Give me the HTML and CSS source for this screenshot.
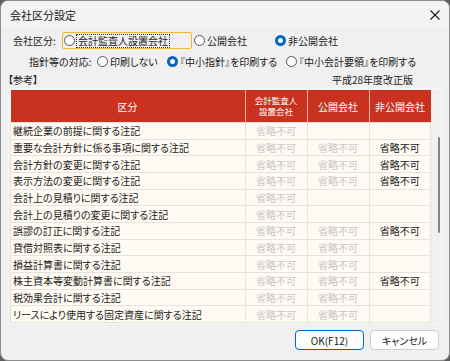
FILE: index.html
```html
<!DOCTYPE html>
<html>
<head>
    <meta charset="utf-8">
    <title>会社区分設定</title>
    <link rel="stylesheet" href="styles.css">
</head>
<body>
    <div class="window">
        <div class="titlebar">
            <span class="title">会社区分設定</span>
            <svg class="close" width="10" height="10" viewBox="0 0 10 10"><path d="M0.5 0.5L9.5 9.5M9.5 0.5L0.5 9.5" stroke="#1a1a1a" stroke-width="1.1"/></svg>
        </div>
        <div class="content">
            <div class="row row-type">
                <span class="label label-type">会社区分:</span>
                <label class="opt opt-focus"><span class="radio"></span><span class="focus-text">会計監査人設置会社</span></label>
                <label class="opt opt-public"><span class="radio"></span>公開会社</label>
                <label class="opt"><span class="radio checked"></span>非公開会社</label>
            </div>
            <div class="row row-print">
                <span class="label label-print">指針等の対応:</span>
                <label class="opt opt-none"><span class="radio"></span>印刷しない</label>
                <label class="opt opt-guide"><span class="radio checked"></span>『中小指針』を印刷する</label>
                <label class="opt"><span class="radio"></span>『中小会計要領』を印刷する</label>
            </div>
            <div class="ref-row">
                <span>【参考】</span>
                <span>平成28年度改正版</span>
            </div>
            <div class="panel">
                <table class="grid">
                    <thead>
                        <tr>
                            <th class="col-name">区分</th>
                            <th class="col-flag small">会計監査人<br>設置会社</th>
                            <th class="col-flag">公開会社</th>
                            <th class="col-flag">非公開会社</th>
                        </tr>
                    </thead>
                    <tbody id="rows"></tbody>
                </table>
                <div class="track"><div class="thumb"></div></div>
            </div>
            <div class="buttons">
                <button class="btn btn-ok">OK(F12)</button>
                <button class="btn">キャンセル</button>
            </div>
        </div>
    </div>

    <script>
        // 0 = 空欄, 1 = 省略不可(灰色), 2 = 省略不可(黒)
        var items = [
            ["継続企業の前提に関する注記", 1, 0, 0],
            ["重要な会計方針に係る事項に関する注記", 1, 1, 2],
            ["会計方針の変更に関する注記", 1, 1, 2],
            ["表示方法の変更に関する注記", 1, 1, 2],
            ["会計上の見積りに関する注記", 1, 0, 0],
            ["会計上の見積りの変更に関する注記", 1, 0, 0],
            ["誤謬の訂正に関する注記", 1, 1, 2],
            ["貸借対照表に関する注記", 1, 1, 0],
            ["損益計算書に関する注記", 1, 1, 0],
            ["株主資本等変動計算書に関する注記", 1, 1, 2],
            ["税効果会計に関する注記", 1, 1, 0],
            ["リースにより使用する固定資産に関する注記", 1, 1, 0]
        ];

        var html = "";
        items.forEach(function (item) {
            html += "<tr><td class='name'>" + item[0] + "</td>";
            for (var i = 1; i < 4; i++) {
                if (item[i] == 0) {
                    html += "<td></td>";
                } else {
                    html += "<td class='" + (item[i] == 1 ? "dim" : "on") + "'>省略不可</td>";
                }
            }
            html += "</tr>";
        });
        document.getElementById('rows').innerHTML = html;
    </script>
</body>
</html>
```

FILE: styles.css
```css
html, body {
    margin: 0;
    padding: 0;
}
body {
    background-color: #5c5c5c;
    font-family: "Noto Sans CJK JP", "Noto Sans", sans-serif;
    font-size: 10px;
    font-feature-settings: "palt";
    color: #1a1a1a;
}
.window {
    width: 450px;
    height: 361px;
    box-sizing: border-box;
    border: 1px solid #8c8c8c;
    border-radius: 8px;
    background-color: #f0f0f0;
    overflow: hidden;
}
.titlebar {
    height: 27px;
    display: flex;
    align-items: center;
    justify-content: space-between;
    padding: 0 6px 0 9px;
    background-color: #f3f3f3;
    font-size: 11px;
}
.close {
    margin-right: 3px;
}
.content {
    padding: 0 7px;
}
.row {
    display: flex;
    align-items: center;
    height: 17px;
}
.row-type {
    margin-top: 4px;
    padding-left: 5px;
}
.row-print {
    margin-top: 4px;
    padding-left: 21px;
}
.label-type {
    width: 49px;
}
.label-print {
    width: 68px;
}
.opt {
    display: flex;
    align-items: center;
    height: 17px;
    box-sizing: border-box;
}
.opt-focus {
    width: 130px;
    border: 1px solid #f2b534;
    border-radius: 2px;
    padding-left: 1px;
    margin-right: 2px;
}
.focus-text {
    outline: 1px dotted #333;
    padding: 0 1px;
    line-height: 12px;
}
.opt-public {
    width: 81px;
}
.opt-none {
    width: 70px;
}
.opt-guide {
    width: 119px;
}
.radio {
    width: 11px;
    height: 11px;
    box-sizing: border-box;
    border: 1px solid #555;
    border-radius: 50%;
    background-color: #fff;
    margin-right: 2px;
    flex-shrink: 0;
}
.radio.checked {
    border: 3.5px solid #0067c0;
    background-color: #fff;
}
.ref-row {
    display: flex;
    justify-content: space-between;
    align-items: center;
    height: 16px;
    margin-top: 1px;
    padding-right: 29px;
}
.panel {
    display: flex;
    align-items: flex-start;
    margin-top: 1px;
    border: 1px solid #f7f7f7;
    padding: 1px;
    height: 236px;
    box-sizing: border-box;
}
.grid {
    width: 417px;
    border-collapse: collapse;
    table-layout: fixed;
    background-color: #fffaf3;
}
.grid th {
    background-color: #c9321f;
    color: #fff;
    font-weight: normal;
    height: 32px;
    padding: 0;
    border-left: 1px solid #eab4aa;
}
.grid th:first-child {
    border-left: none;
}
.grid th.small {
    font-size: 8.5px;
    line-height: 11px;
}
.col-name {
    width: 234px;
}
.col-flag {
    width: 61px;
}
.grid tbody tr {
    height: 16.67px;
}
.grid td {
    padding: 0;
    border: 1px solid #e6e2dc;
    text-align: center;
    white-space: nowrap;
    line-height: 13px;
}
.grid td.name {
    text-align: left;
    padding-left: 2px;
}
.grid td.dim {
    color: #c6c6c6;
}
.grid td.on {
    color: #1a1a1a;
}
.track {
    width: 13px;
}
.thumb {
    width: 2px;
    height: 96px;
    margin: 47px 0 0 7px;
    background-color: #858585;
    border-radius: 1px;
}
.buttons {
    display: flex;
    justify-content: flex-end;
    gap: 6px;
    margin-top: 6px;
    padding-right: 3px;
}
.btn {
    width: 69px;
    height: 20px;
    font-family: inherit;
    font-size: 10px;
    font-feature-settings: "palt";
    background-color: #fdfdfd;
    border: 1px solid #d0d0d0;
    border-radius: 4px;
    color: #1a1a1a;
    padding: 0;
}
.btn-ok {
    border-color: #0067c0;
}
```
